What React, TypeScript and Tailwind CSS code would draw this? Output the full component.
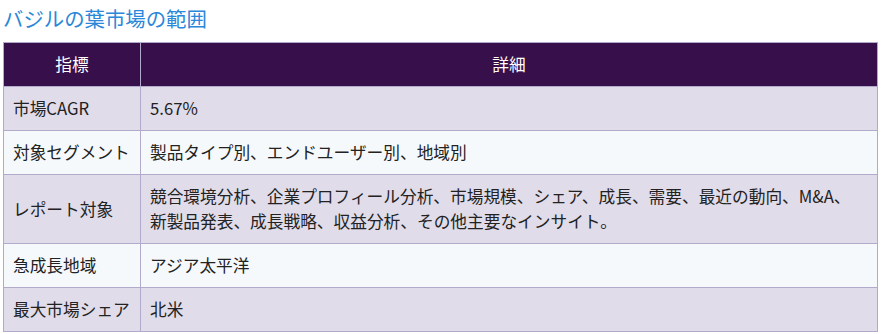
const rows: [string, string][] = [
  ["市場CAGR", "5.67%"],
  ["対象セグメント", "製品タイプ別、エンドユーザー別、地域別"],
  [
    "レポート対象",
    "競合環境分析、企業プロフィール分析、市場規模、シェア、成長、需要、最近の動向、M&A、新製品発表、成長戦略、収益分析、その他主要なインサイト。",
  ],
  ["急成長地域", "アジア太平洋"],
  ["最大市場シェア", "北米"],
];

export default function App() {
  return (
    <div
      className="bg-white px-[3px] pt-[4px] text-[16.7px] text-[#222]"
      style={{ fontFamily: '"Noto Sans CJK JP", "Noto Sans", sans-serif' }}
    >
      <h2 className="mb-[10px] text-[20.4px] font-normal leading-[28px] text-[#2b87d8]">
        バジルの葉市場の範囲
      </h2>
      <table className="w-[875px] border-collapse">
        <thead>
          <tr className="bg-[#37104b] text-white">
            <th className="h-[44px] w-[137px] border border-[#b2aacb] font-normal">指標</th>
            <th className="h-[44px] border border-[#b2aacb] font-normal">詳細</th>
          </tr>
        </thead>
        <tbody>
          {rows.map(([k, v], i) => (
            <tr key={k} className={i % 2 === 0 ? "bg-[#e0dcea]" : "bg-[#f5f9fc]"}>
              <td className="h-[44px] border border-[#b2aacb] px-[9px] py-[9px] leading-[25px]">{k}</td>
              <td className="h-[44px] border border-[#b2aacb] py-[9px] pl-[9px] pr-[16px] leading-[25px]">{v}</td>
            </tr>
          ))}
        </tbody>
      </table>
    </div>
  );
}
